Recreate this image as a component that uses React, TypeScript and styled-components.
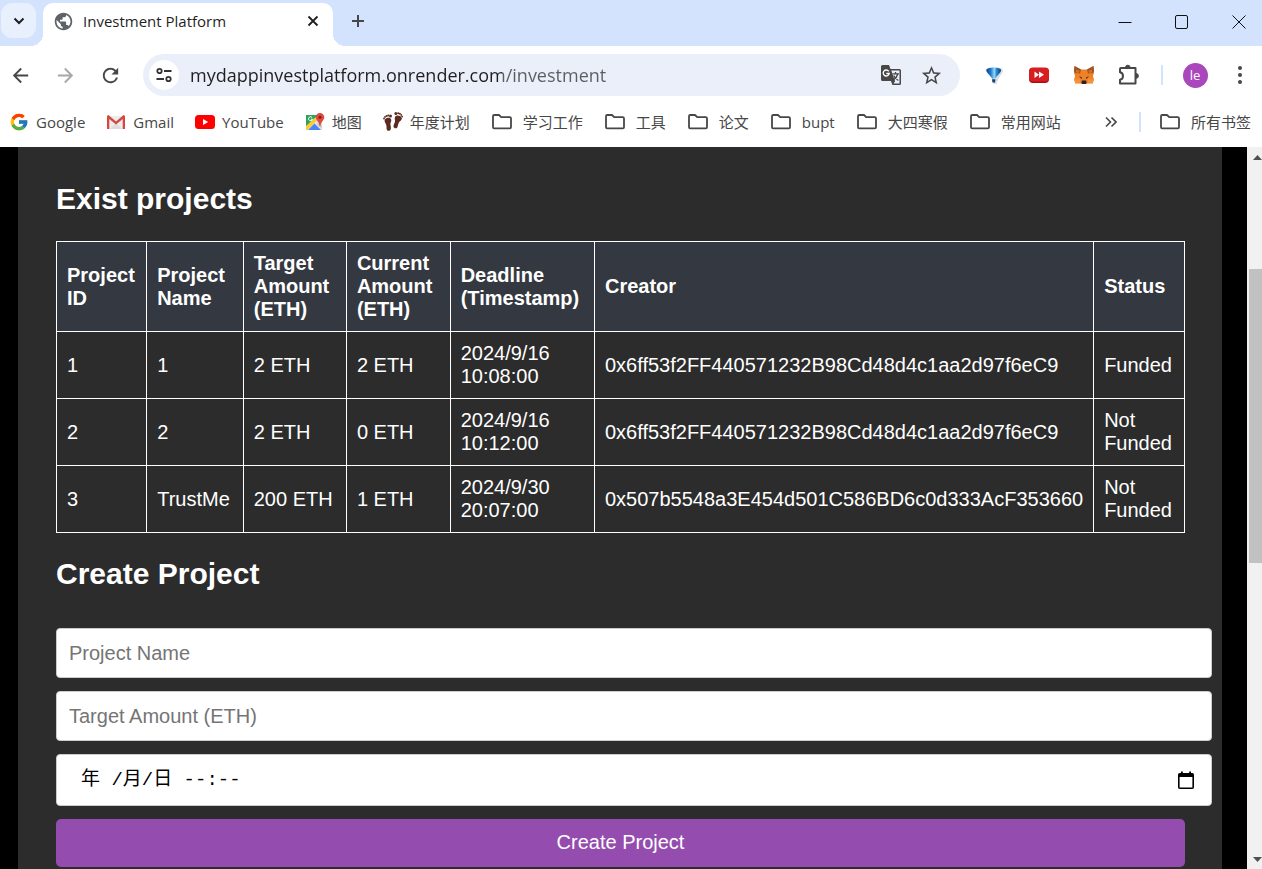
import React from "react";
import styled, { createGlobalStyle, css } from "styled-components";
import { FcGoogle } from "react-icons/fc";
import { MdPublic, MdStarBorder, MdArrowBack, MdArrowForward, MdRefresh } from "react-icons/md";

const uiFont = `"Open Sans", "Noto Sans CJK SC", sans-serif`;
const pageFont = `"Liberation Sans", Arial, "Noto Sans CJK SC", sans-serif`;

const GlobalStyle = createGlobalStyle`
  *, *::before, *::after { box-sizing: border-box; }
  body { margin: 0; background: #000; }
  button { border: 0; padding: 0; background: none; font: inherit; color: inherit; }
  svg { display: block; flex: none; }
`;

const BrowserWindow = styled.div`
  display: flex;
  flex-direction: column;
  height: 100vh;
  overflow: hidden;
  font-family: ${uiFont};
  color: #1f1f1f;
`;

/* Tab strip */

const TabStrip = styled.header`
  display: flex;
  align-items: flex-end;
  height: 46px;
  flex: none;
  background: #d3e3fd;
`;

const TabSearchButton = styled.button`
  display: grid;
  place-items: center;
  width: 35px;
  height: 35px;
  margin: 0 7px 8px 1px;
  border-radius: 11px;
  background: #e9f0fd;
`;

const Tab = styled.div`
  position: relative;
  display: flex;
  align-items: center;
  width: 290px;
  height: 43px;
  padding: 0 10px 7px;
  border-radius: 10px 10px 0 0;
  background: #fff;

  &::before,
  &::after {
    content: "";
    position: absolute;
    bottom: 0;
    width: 12px;
    height: 12px;
  }
  &::before {
    right: 100%;
    background: radial-gradient(circle at 0 0, transparent 12px, #fff 12px);
  }
  &::after {
    left: 100%;
    background: radial-gradient(circle at 100% 0, transparent 12px, #fff 12px);
  }
`;

const TabTitle = styled.span`
  flex: 1;
  margin-left: 9px;
  font-size: 15px;
  line-height: 22px;
  white-space: nowrap;
`;

const StripButton = styled.button`
  display: grid;
  place-items: center;
  width: 20px;
  height: 20px;
`;

const NewTabButton = styled(StripButton)`
  margin: 0 0 15px 15px;
`;

const WindowControls = styled.div`
  display: flex;
  gap: 11px;
  margin-left: auto;
`;

const WindowButton = styled.button`
  display: grid;
  place-items: center;
  width: 46px;
  height: 46px;
  padding-bottom: 3px;
`;

/* Toolbar */

const Toolbar = styled.div`
  display: flex;
  align-items: center;
  flex: none;
  gap: 5px;
  height: 58px;
  padding-right: 2px;
  background: #fff;
`;

const ToolButton = styled.button<{ $dim?: boolean }>`
  display: grid;
  place-items: center;
  flex: none;
  width: 40px;
  height: 40px;
  color: ${(p) => (p.$dim ? "#a8a8a8" : "#474747")};
`;

const AddressBar = styled.form`
  display: flex;
  align-items: center;
  flex: 1;
  min-width: 0;
  height: 42px;
  margin: 0 9px 0 8px;
  padding: 0 9px 0 6px;
  border-radius: 21px;
  background: #ebeff9;
`;

const SiteInfoButton = styled.button`
  display: grid;
  place-items: center;
  flex: none;
  width: 30px;
  height: 30px;
  border-radius: 50%;
  background: #fff;
`;

const AddressInput = styled.input`
  flex: 1;
  min-width: 0;
  margin-left: 11px;
  padding: 0;
  border: 0;
  outline: 0;
  background: linear-gradient(90deg, #1f1f1f 312px, #5a5d61 312px);
  background-clip: text;
  -webkit-text-fill-color: transparent;
  font-family: ${uiFont};
  font-size: 18px;
  line-height: 26px;
`;

const Separator = styled.span<{ $gap: number }>`
  flex: none;
  width: 2px;
  height: 20px;
  margin: 0 ${(p) => p.$gap}px;
  background: #d3e3fd;
`;

const Avatar = styled.span`
  display: grid;
  place-items: center;
  width: 25px;
  height: 25px;
  border-radius: 50%;
  background: #ab47bc;
  color: #fff;
  font-size: 13px;
  line-height: 20px;
`;

/* Bookmarks bar */

const BookmarksBar = styled.nav`
  display: flex;
  align-items: center;
  flex: none;
  gap: 21px;
  height: 43px;
  padding: 0 11px 8px 9px;
  background: #fff;
  color: #474747;
  font-size: 15px;
  line-height: 22px;
  white-space: nowrap;
`;

const Bookmark = styled.a<{ $folder?: boolean }>`
  display: flex;
  align-items: center;
  gap: ${(p) => (p.$folder ? 10 : 7)}px;
  color: inherit;
  text-decoration: none;
`;

const BookmarksEnd = styled.div`
  display: flex;
  align-items: center;
  margin-left: auto;
`;

/* Page */

const Viewport = styled.div`
  display: flex;
  flex: 1;
  min-height: 0;
  background: #000;
`;

const Panel = styled.main`
  flex: 1;
  min-width: 0;
  margin: 0 25px 0 18px;
  padding: 35px 37px 0 38px;
  background: #2c2c2c;
  color: #fff;
  font-family: ${pageFont};
  font-size: 20px;
  line-height: 23px;
`;

const Heading = styled.h2`
  margin: 0 0 25px;
  font-size: 30px;
  line-height: 34px;
`;

const ProjectTable = styled.table`
  width: 100%;
  margin-bottom: 24px;
  border-collapse: collapse;

  th, td {
    padding: 10px;
    border: 1px solid #fff;
    text-align: left;
  }
  th { background: #343840; }
`;

const ProjectForm = styled.form`
  display: flex;
  flex-direction: column;
  gap: 13px;
  padding-top: 12px;
`;

const fieldBox = css`
  box-sizing: content-box;
  width: 100%;
  padding: 12px 13px 12px 12px;
  border: 1px solid #ccc;
  border-radius: 4px;
  background: #fff;
`;

const TextField = styled.input`
  ${fieldBox}
  height: 24px;
  font-family: ${pageFont};
  font-size: 20px;
  &::placeholder { color: #757575; }
`;

const DateField = styled.div`
  ${fieldBox}
  display: flex;
  align-items: center;
  height: 26px;
  color: #000;
`;

const DateInput = styled.input`
  flex: 1;
  min-width: 0;
  margin-left: 12px;
  padding: 0;
  border: 0;
  outline: 0;
  background: none;
  font-family: "Liberation Mono", "Noto Sans CJK SC", monospace;
  font-size: 19px;
  line-height: 26px;
`;

const CalendarButton = styled.button`
  margin-right: 4px;
`;

const SubmitButton = styled.button`
  height: 48px;
  padding-bottom: 2px;
  border-radius: 5px;
  background: #944dae;
  color: #fff;
`;

/* Scrollbar */

const Scrollbar = styled.div`
  display: flex;
  flex-direction: column;
  flex: none;
  width: 15px;
  background: #f1f1f1;
`;

const ScrollArrow = styled.span`
  display: flex;
  justify-content: flex-end;
  align-items: center;
  height: 20px;
`;

const ScrollSpace = styled.span<{ $grow: number }>`
  flex: ${(p) => p.$grow} 1 0;
`;

const ScrollThumb = styled(ScrollSpace)`
  margin-left: 2px;
  background: #c1c1c1;
`;

/* Icons */

const FolderIcon = () => (
  <svg width="22" height="20" viewBox="0 0 22 20" fill="none" stroke="#474747" strokeWidth="1.8" strokeLinejoin="round">
    <path d="M2 15.2V4.2q0-1.2 1.2-1.2H8l2.200 2.200h8.600q1.200 0 1.200 1.200v8.800q0 1.200-1.200 1.200H3.200Q2 16.400 2 15.200Z" />
  </svg>
);

const GmailIcon = () => (
  <svg width="20" height="20" viewBox="0 0 20 20">
    <path d="M2 4h16v13H2z" fill="#ececec" />
    <path d="M4 17 10 11l6 6z" fill="#dcdcdc" />
    <path d="M1 17V4.500Q1 3 2.400 3L10 9.600 17.600 3Q19 3 19 4.500V17H16.700V7L10 12.600 3.300 7V17Z" fill="#d5483f" />
  </svg>
);

const YouTubeIcon = () => (
  <svg width="20" height="20" viewBox="0 0 20 20">
    <rect x="0" y="3" width="20" height="14" rx="3.500" fill="#f00" />
    <path d="M8 7v6l5.200-3z" fill="#fff" />
  </svg>
);

const MapsIcon = () => (
  <svg width="20" height="20" viewBox="0 0 20 20">
    <path d="M1 3h16v15H1z" fill="#e8e8e8" />
    <path d="M1 3h12L1 15z" fill="#2fa35a" />
    <path d="M1 14 10 6l2 2.500L2.500 18H1z" fill="#fbcc34" />
    <path d="M3 18l6.500-6.500L16 18z" fill="#4a86f0" />
    <path d="M14 10l3 3v4.500L11 12z" fill="#d0d0d0" />
    <path d="M15 1a4.300 4.300 0 0 1 4.300 4.300c0 3-3.300 4-3.800 8.700h-1c-.5-4.700-3.800-5.700-3.800-8.700A4.300 4.300 0 0 1 15 1z" fill="#dd4b3e" />
    <circle cx="15" cy="5.300" r="1.500" fill="#7d2018" />
    <path d="M7.200 5.600A2 2 0 1 0 7.500 7.200H5.800" fill="none" stroke="#fff" strokeWidth="1" />
  </svg>
);

const FootprintsIcon = () => (
  <svg width="20" height="20" viewBox="0 0 20 20" fill="#5c2a20">
    <path d="M1.800 7.500C3.500 5 7.500 5 8.200 7.500c.5 2-.9 2.800-.8 4.800.1 2 .9 3.200.3 5-.6 2-3.500 2-4 0-.4-1.500.1-2.700-.5-4.500-.5-1.600-2.300-3.300-1.400-5.300z" />
    <circle cx="1" cy="6.500" r=".9" /><circle cx="2" cy="4.900" r=".9" /><circle cx="3.500" cy="3.900" r="1" /><circle cx="5.200" cy="3.500" r="1" /><circle cx="7.500" cy="4" r="1.500" />
    <path d="M18.700 5.800c-1.300-2.600-5.600-3.300-6.700-.8-.8 1.900.4 2.900 0 4.800-.4 2-1.700 2.900-1.500 4.700.2 2 3.200 2.600 4 .6.600-1.500.3-2.700 1.300-4.400.9-1.500 3.700-2.900 2.900-4.900z" />
    <circle cx="19.100" cy="4.600" r=".9" /><circle cx="18.300" cy="2.900" r=".9" /><circle cx="16.900" cy="1.700" r="1" /><circle cx="15.200" cy="1.200" r="1" /><circle cx="12.900" cy="1.600" r="1.500" />
  </svg>
);

const TuneIcon = () => (
  <svg width="18" height="18" viewBox="0 0 18 18" fill="none" stroke="#333" strokeWidth="1.800">
    <circle cx="4.500" cy="5" r="2.200" />
    <path d="M9 5h7.500M1.500 13H9" />
    <circle cx="13.500" cy="13" r="2.200" />
  </svg>
);

const TranslateIcon = () => (
  <svg width="22" height="22" viewBox="0 0 22 22">
    <path d="M2.500 1H9l1.500 4h9q1.500 0 1.500 1.500V19.500q0 1.500-1.500 1.500H12.500L11 17H2.500Q1 17 1 15.500V2.500Q1 1 2.500 1z" fill="#474747" />
    <path d="M11.300 6.500H19.500V19.500H13.500L15 17z" fill="#ebeff9" />
    <path d="M8.700 7.300A3 3 0 1 0 9.200 9.500H6.300" fill="none" stroke="#fff" strokeWidth="1.400" />
    <path d="M12.500 9.800h6.500M15.500 8v1.800M17.700 10c-.6 2.800-2.200 4.500-4 5.700M13.700 11.500c.8 1.800 2.400 3.500 4.600 5" fill="none" stroke="#474747" strokeWidth="1.300" />
    <path d="M11.500 17h3.500l-2.700 3.500z" fill="#474747" />
  </svg>
);

const BalloonIcon = () => (
  <svg width="20" height="20" viewBox="0 0 20 20">
    <defs>
      <linearGradient id="balloon" x1="0" y1="0" x2="1" y2="0">
        <stop offset="0" stopColor="#0e3f86" />
        <stop offset=".3" stopColor="#1f78cc" />
        <stop offset=".55" stopColor="#8fd8f8" />
        <stop offset=".7" stopColor="#2a86d2" />
        <stop offset="1" stopColor="#0c3a78" />
      </linearGradient>
    </defs>
    <path d="M6 5.500C9 2 18 2 19 5c.5 3.500-4.500 6-6.500 14h-3z" fill="#d9dde1" />
    <path d="M2.300 4.800C3.500 1.800 15.800 1.800 17 4.800c.6 2.600-4 5.600-5.600 8.700H8C6.500 10.400 1.700 7.400 2.300 4.800z" fill="url(#balloon)" />
    <path d="M8 14.200h3.400l-.4 3.300H8.500z" fill="#123f70" />
  </svg>
);

const FastForwardIcon = () => (
  <svg width="22" height="20" viewBox="0 0 22 20">
    <rect x="1" y="3" width="20" height="15" rx="4" fill="#a80f12" />
    <rect x="1" y="2.500" width="20" height="14" rx="4" fill="#d71f22" />
    <path d="M6.500 6.500v6.500l4.500-3.200zM11 6.500v6.500l5-3.200z" fill="#fff" />
  </svg>
);

const FoxIcon = () => (
  <svg width="22" height="20" viewBox="0 0 22 20">
    <path d="M1.500 1 8 4.500h6L20.500 1l.5 7-1 3 1 4-1.500 3.500h-5L13 19H9l-1.500-.5h-5L1 15l1-4-1-3z" fill="#ef8128" />
    <path d="M1.500 1 8 4.500 7 8.500 2 8 1 6zM20.500 1 14 4.500l1 4 5-.5 1-2z" fill="#9a5426" />
    <path d="M3 4.500l3.500 1.300L6 8 3 7.500zM19 4.500l-3.500 1.300L16 8l3-.5z" fill="#d96f2a" />
    <path d="M6 11l3 1.500-.5 1.500zM16 11l-3 1.500.5 1.500z" fill="#3a2a20" />
    <path d="M9 15.500h4l.5 2L13 19H9l-.5-1.500z" fill="#2b2522" />
    <path d="M2.500 18.500l5-1-1-3.500L2 14.500zM19.500 18.500l-5-1 1-3.500 4.500.5z" fill="#f2953c" />
  </svg>
);

const PuzzleIcon = () => (
  <svg width="22" height="22" viewBox="0 0 22 22">
    <path
      d="M3 4H17.500V19.500H2V15.800c4-.8 4-6.800 0-7.600V5q0-1 1-1Z"
      fill="none"
      stroke="#474747"
      strokeWidth="2"
      strokeLinejoin="round"
    />
    <path d="M7.500 3.500a2.300 2.300 0 0 1 4.600 0zM18 9.500a2.400 2.400 0 0 1 0 4.800z" fill="#474747" stroke="#474747" />
  </svg>
);

const CalendarIcon = () => (
  <svg width="16" height="18" viewBox="0 0 16 18">
    <rect x=".8" y="2.800" width="14.400" height="14.400" rx="1" fill="none" stroke="#000" strokeWidth="1.600" />
    <path d="M1 3h14v3H1zM3 .5h1.800V3H3zM11.200.5H13V3h-1.800z" fill="#000" />
  </svg>
);

const folders = ["学习工作", "工具", "论文", "bupt", "大四寒假", "常用网站"];

const sites = [
  { name: "Google", icon: <FcGoogle size={20} /> },
  { name: "Gmail", icon: <GmailIcon /> },
  { name: "YouTube", icon: <YouTubeIcon /> },
  { name: "地图", icon: <MapsIcon /> },
  { name: "年度计划", icon: <FootprintsIcon /> },
];

const columns = [
  "Project ID",
  "Project Name",
  "Target Amount (ETH)",
  "Current Amount (ETH)",
  "Deadline (Timestamp)",
  "Creator",
  "Status",
];

const projects = [
  ["1", "1", "2 ETH", "2 ETH", "2024/9/16 10:08:00", "0x6ff53f2FF440571232B98Cd48d4c1aa2d97f6eC9", "Funded"],
  ["2", "2", "2 ETH", "0 ETH", "2024/9/16 10:12:00", "0x6ff53f2FF440571232B98Cd48d4c1aa2d97f6eC9", "Not Funded"],
  ["3", "TrustMe", "200 ETH", "1 ETH", "2024/9/30 20:07:00", "0x507b5548a3E454d501C586BD6c0d333AcF353660", "Not Funded"],
];

export default function App() {
  return (
    <BrowserWindow>
      <GlobalStyle />
      <TabStrip>
        <TabSearchButton aria-label="Search tabs">
          <svg width="12" height="12" viewBox="0 0 12 12" fill="none" stroke="#1f1f1f" strokeWidth="2">
            <path d="M1.500 3.500 6 8l4.500-4.500" />
          </svg>
        </TabSearchButton>
        <Tab>
          <MdPublic size={21} color="#5f6368" />
          <TabTitle>Investment Platform</TabTitle>
          <StripButton aria-label="Close tab">
            <svg width="12" height="12" viewBox="0 0 12 12" stroke="#1f1f1f" strokeWidth="1.800">
              <path d="M1.500 1.500l9 9M10.500 1.500l-9 9" />
            </svg>
          </StripButton>
        </Tab>
        <NewTabButton aria-label="New tab">
          <svg width="14" height="14" viewBox="0 0 14 14" stroke="#474747" strokeWidth="2">
            <path d="M7 1v12M1 7h12" />
          </svg>
        </NewTabButton>
        <WindowControls>
          <WindowButton aria-label="Minimize">
            <svg width="14" height="14" viewBox="0 0 14 14" stroke="#111">
              <path d="M.5 7.500h13" />
            </svg>
          </WindowButton>
          <WindowButton aria-label="Maximize">
            <svg width="14" height="14" viewBox="0 0 14 14" fill="none" stroke="#111">
              <rect x=".5" y=".5" width="12" height="13" rx="1.500" />
            </svg>
          </WindowButton>
          <WindowButton aria-label="Close window">
            <svg width="14" height="14" viewBox="0 0 14 14" stroke="#111">
              <path d="M.5.5l13 13M13.500.5l-13 13" />
            </svg>
          </WindowButton>
        </WindowControls>
      </TabStrip>

      <Toolbar>
        <ToolButton aria-label="Back"><MdArrowBack size={23} /></ToolButton>
        <ToolButton aria-label="Forward" $dim><MdArrowForward size={23} /></ToolButton>
        <ToolButton aria-label="Reload"><MdRefresh size={23} /></ToolButton>
        <AddressBar onSubmit={(e) => e.preventDefault()}>
          <SiteInfoButton type="button" aria-label="Site information"><TuneIcon /></SiteInfoButton>
          <AddressInput aria-label="Address" defaultValue="mydappinvestplatform.onrender.com/investment" spellCheck={false} />
          <ToolButton type="button" aria-label="Translate"><TranslateIcon /></ToolButton>
          <ToolButton type="button" aria-label="Bookmark this page"><MdStarBorder size={23} /></ToolButton>
        </AddressBar>
        <ToolButton aria-label="Balloon extension"><BalloonIcon /></ToolButton>
        <ToolButton aria-label="Video extension"><FastForwardIcon /></ToolButton>
        <ToolButton aria-label="Wallet extension"><FoxIcon /></ToolButton>
        <ToolButton aria-label="Extensions"><PuzzleIcon /></ToolButton>
        <Separator $gap={7} />
        <ToolButton aria-label="Profile"><Avatar>le</Avatar></ToolButton>
        <ToolButton aria-label="Menu">
          <svg width="6" height="20" viewBox="0 0 6 20" fill="#474747">
            <circle cx="3" cy="3" r="2" /><circle cx="3" cy="10" r="2" /><circle cx="3" cy="17" r="2" />
          </svg>
        </ToolButton>
      </Toolbar>

      <BookmarksBar>
        {sites.map((s) => (
          <Bookmark key={s.name} href="#">{s.icon}{s.name}</Bookmark>
        ))}
        {folders.map((name) => (
          <Bookmark key={name} href="#" $folder><FolderIcon />{name}</Bookmark>
        ))}
        <BookmarksEnd>
          <StripButton aria-label="More bookmarks">
            <svg width="12" height="12" viewBox="0 0 12 12" fill="none" stroke="#474747" strokeWidth="1.600">
              <path d="M1 1.500 5.500 6 1 10.500M6.500 1.500 11 6l-4.500 4.500" />
            </svg>
          </StripButton>
          <Separator $gap={18} />
          <Bookmark href="#" $folder><FolderIcon />所有书签</Bookmark>
        </BookmarksEnd>
      </BookmarksBar>

      <Viewport>
        <Panel>
          <Heading>Exist projects</Heading>
          <ProjectTable>
            <thead>
              <tr>{columns.map((c) => <th key={c} scope="col">{c}</th>)}</tr>
            </thead>
            <tbody>
              {projects.map((row) => (
                <tr key={row[0]}>{row.map((cell, i) => <td key={i}>{cell}</td>)}</tr>
              ))}
            </tbody>
          </ProjectTable>
          <Heading>Create Project</Heading>
          <ProjectForm onSubmit={(e) => e.preventDefault()}>
            <TextField aria-label="Project Name" placeholder="Project Name" />
            <TextField aria-label="Target Amount (ETH)" placeholder="Target Amount (ETH)" />
            <DateField>
              <DateInput aria-label="Deadline" defaultValue="年 /月/日 --:--" />
              <CalendarButton type="button" aria-label="Open calendar"><CalendarIcon /></CalendarButton>
            </DateField>
            <SubmitButton type="submit">Create Project</SubmitButton>
          </ProjectForm>
        </Panel>
        <Scrollbar aria-hidden="true">
          <ScrollArrow>
            <svg width="9" height="5" viewBox="0 0 9 5" fill="#505050"><path d="M0 5 4.500 0 9 5z" /></svg>
          </ScrollArrow>
          <ScrollSpace $grow={102} />
          <ScrollThumb $grow={294} />
          <ScrollSpace $grow={286} />
          <ScrollArrow>
            <svg width="9" height="5" viewBox="0 0 9 5" fill="#505050"><path d="M0 0h9L4.500 5z" /></svg>
          </ScrollArrow>
        </Scrollbar>
      </Viewport>
    </BrowserWindow>
  );
}
